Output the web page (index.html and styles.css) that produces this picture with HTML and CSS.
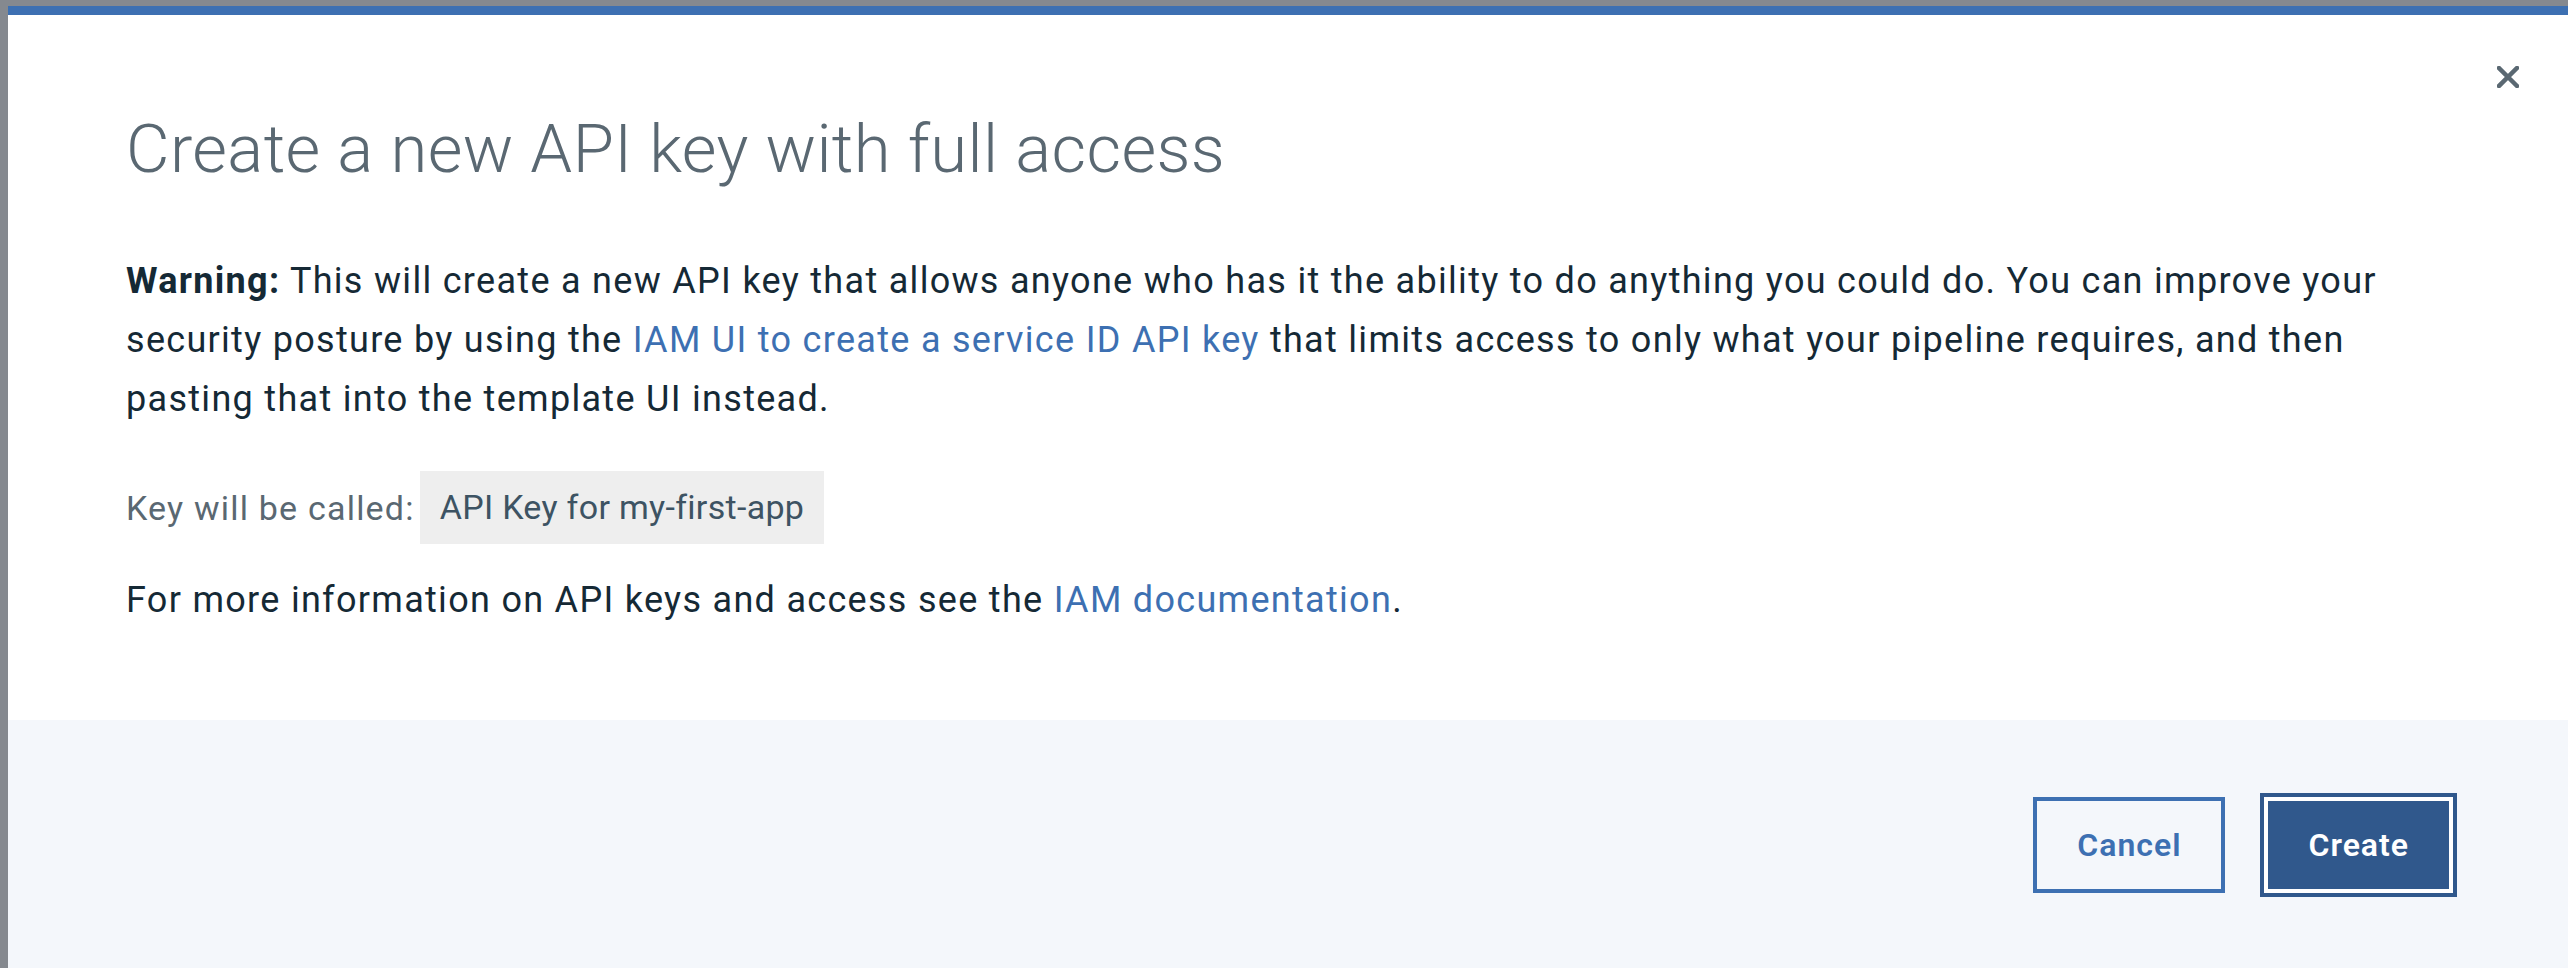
FILE: index.html
```html
<!DOCTYPE html>
<html lang="en">
<head>
<meta charset="utf-8">
<title>Create a new API key with full access</title>
<link rel="stylesheet" href="styles.css">
</head>
<body>
<div class="overlay">
  <div class="modal">
    <button class="close" aria-label="Close">
      <svg viewBox="0 0 22 22" width="22" height="22"><path d="M2 2 L20 20 M20 2 L2 20" stroke="#5a6872" stroke-width="4.5" stroke-linecap="square" fill="none"/></svg>
    </button>
    <div class="modal-body">
      <h2 class="title">Create a new API key with full access</h2>
      <p class="text"><strong>Warning:</strong> This will create a new API key that allows anyone who has it the ability to do anything you could do. You can improve your security posture by using the <a href="#">IAM UI to create a service ID API key</a> that limits access to only what your pipeline requires, and then pasting that into the template UI instead.</p>
      <p class="key-row"><span class="key-label">Key will be called:</span><span class="chip">API Key for my-first-app</span></p>
      <p class="text more">For more information on API keys and access see the <a href="#">IAM documentation</a>.</p>
    </div>
    <div class="modal-footer">
      <button class="btn btn-secondary">Cancel</button>
      <button class="btn btn-primary">Create</button>
    </div>
  </div>
</div>
</body>
</html>
```
FILE: styles.css
```css
html, body {
  margin: 0;
  padding: 0;
  height: 100%;
  overflow: hidden;
}
body {
  background: #85898f;
  font-family: "Roboto", "Liberation Sans", sans-serif;
}
.overlay {
  padding: 6px 0 0 8px;
  height: 100%;
  box-sizing: border-box;
}
.modal {
  position: relative;
  background: #ffffff;
  border-top: 9px solid #3d70b2;
  height: 100%;
  box-sizing: border-box;
  display: flex;
  flex-direction: column;
}
.close {
  position: absolute;
  top: 51px;
  right: 49px;
  background: none;
  border: 0;
  padding: 0;
  width: 22px;
  height: 22px;
  cursor: pointer;
}
.close svg { display: block; }
.modal-body {
  padding: 94px 115px 0 118px;
  height: 705px;
  box-sizing: border-box;
  flex: none;
}
.title {
  margin: 0;
  font-weight: 300;
  font-size: 67px;
  line-height: 80px;
  letter-spacing: 0.4px;
  color: #5a6872;
}
.text {
  margin: 0;
  font-size: 36px;
  line-height: 59px;
  letter-spacing: 1.3px;
  color: #152935;
}
.text strong { font-weight: 700; }
.modal-body > .text:first-of-type { margin-top: 63px; }
.text a {
  color: #3d70b2;
  text-decoration: none;
}
.key-row {
  margin: 42px 0 0;
  display: flex;
  align-items: center;
  font-size: 34px;
}
.key-label {
  color: #5a6872;
  letter-spacing: 1.2px;
  margin-right: 5px;
}
.chip {
  background: #eeeeee;
  color: #3d5363;
  height: 73px;
  line-height: 73px;
  padding: 0 20px;
  letter-spacing: 0.3px;
}
.more { margin-top: 27px; }
.modal-footer {
  flex: 1;
  background: #f4f7fb;
  display: flex;
  justify-content: flex-end;
  align-items: flex-start;
  padding: 77px 115px 0 0;
  gap: 39px;
}
.btn {
  font-family: inherit;
  font-size: 32px;
  font-weight: 600;
  letter-spacing: 1px;
  height: 96px;
  box-sizing: border-box;
  padding: 0 40px;
  cursor: pointer;
}
.btn-secondary {
  background: transparent;
  color: #3d70b2;
  border: 4px solid #3d70b2;
}
.btn-primary {
  background: #30588c;
  color: #ffffff;
  border: 4px solid #ffffff;
  box-shadow: 0 0 0 4px #30588c;
}
```
